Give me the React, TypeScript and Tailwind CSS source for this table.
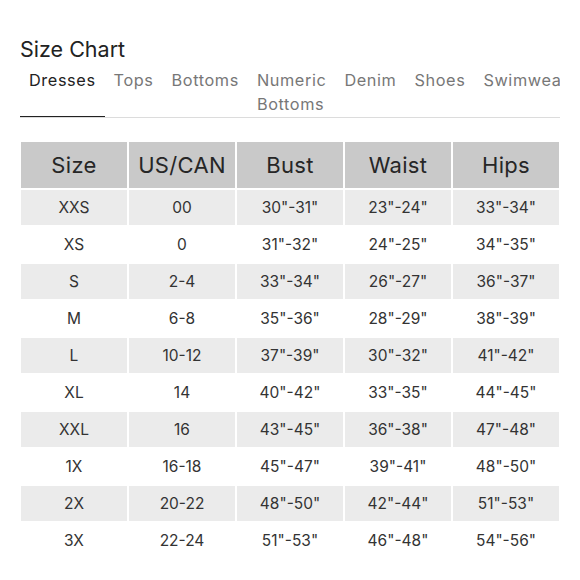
import React from 'react'

const TABS = ['Dresses', 'Tops', 'Bottoms', 'Numeric Bottoms', 'Denim', 'Shoes', 'Swimwear']

const HEADERS = ['Size', 'US/CAN', 'Bust', 'Waist', 'Hips']

const ROWS: string[][] = [
  ['XXS', '00', '30"-31"', '23"-24"', '33"-34"'],
  ['XS', '0', '31"-32"', '24"-25"', '34"-35"'],
  ['S', '2-4', '33"-34"', '26"-27"', '36"-37"'],
  ['M', '6-8', '35"-36"', '28"-29"', '38"-39"'],
  ['L', '10-12', '37"-39"', '30"-32"', '41"-42"'],
  ['XL', '14', '40"-42"', '33"-35"', '44"-45"'],
  ['XXL', '16', '43"-45"', '36"-38"', '47"-48"'],
  ['1X', '16-18', '45"-47"', '39"-41"', '48"-50"'],
  ['2X', '20-22', '48"-50"', '42"-44"', '51"-53"'],
  ['3X', '22-24', '51"-53"', '46"-48"', '54"-56"'],
]

export default function App() {
  return (
    <div
      className="w-[580px] h-[580px] overflow-hidden bg-white text-[#333]"
      style={{ fontFamily: 'Inter, "Open Sans", sans-serif' }}
    >
      <div className="px-[20px] pt-[36px]">
        <h1 className="text-[21.5px] leading-[26px] text-[#222] font-normal">Size Chart</h1>

        {/* Tabs */}
        <div className="mt-[6px] w-[540px] overflow-hidden border-b border-[#dcdcdc]">
          <div className="flex w-max">
            {TABS.map((tab, i) => (
              <div
                key={tab}
                className={
                  'px-[9px] pb-[1px] text-[16.3px] tracking-[0.6px] leading-[24px] whitespace-nowrap ' +
                  (i === 0 ? 'text-[#222] border-b-[2px] border-[#222] -mb-px' : 'text-[#777]')
                }
              >
                {tab === 'Numeric Bottoms' ? (
                  <>
                    Numeric
                    <br />
                    Bottoms
                  </>
                ) : (
                  tab
                )}
              </div>
            ))}
          </div>
        </div>

        {/* Size table */}
        <table className="mt-[22px] -ml-[1px] border-separate border-spacing-[2px] table-fixed w-[542px]">
          <thead>
            <tr>
              {HEADERS.map((h) => (
                <th
                  key={h}
                  className="bg-[#c9c9c9] h-[46px] text-[22px] tracking-[0.3px] font-normal text-[#262626] text-center"
                >
                  {h}
                </th>
              ))}
            </tr>
          </thead>
          <tbody>
            {ROWS.map((row, r) => (
              <tr key={row[0]}>
                {row.map((cell, c) => (
                  <td
                    key={c}
                    className={
                      'h-[35px] text-[15.5px] text-center text-[#333] ' +
                      (r % 2 === 0 ? 'bg-[#ebebeb]' : 'bg-white')
                    }
                  >
                    {cell}
                  </td>
                ))}
              </tr>
            ))}
          </tbody>
        </table>
      </div>
    </div>
  )
}
